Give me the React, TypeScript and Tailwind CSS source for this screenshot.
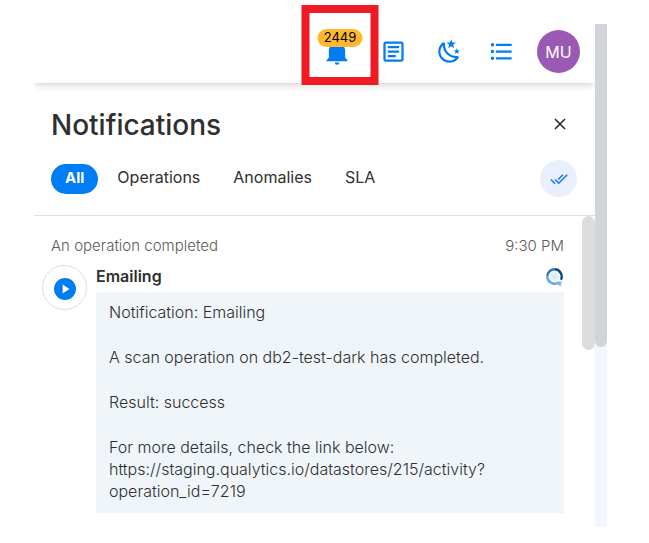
import React, { useState } from "react";
import { MdFormatListBulleted, MdOutlineArticle } from "react-icons/md";

const TABS = ["All", "Operations", "Anomalies", "SLA"];

const MESSAGE = [
  "Notification: Emailing",
  "A scan operation on db2-test-dark has completed.",
  "Result: success",
];

function BellIcon() {
  return (
    <svg viewBox="0 0 24 24" className="size-7" fill="currentColor" aria-hidden="true">
      <path d="M21 19v1H3v-1l2-2v-6c0-3.1 2.03-5.83 5-6.71V4a2 2 0 0 1 4 0v.29c2.97.88 5 3.61 5 6.71v6l2 2m-7 2a2 2 0 0 1-4 0" />
    </svg>
  );
}

function NightIcon() {
  return (
    <svg viewBox="0 0 24 24" className="size-[27px]" fill="currentColor" aria-hidden="true">
      <path d="M17.75 4.09L15.22 6.03L16.13 9.09L13.5 7.28L10.87 9.09L11.78 6.03L9.25 4.09L12.44 4L13.5 1L14.56 4L17.75 4.09M21.25 11L19.61 12.25L20.2 14.23L18.5 13.06L16.8 14.23L17.39 12.25L15.75 11L17.81 10.95L18.5 9L19.19 10.95L21.25 11M18.97 15.95C19.8 15.87 20.69 17.05 20.16 17.8C19.84 18.25 19.5 18.67 19.08 19.07C15.17 23 8.84 23 4.94 19.07C1.03 15.17 1.03 8.83 4.94 4.93C5.34 4.53 5.76 4.17 6.21 3.85C6.96 3.32 8.14 4.21 8.06 5.04C7.79 7.9 8.75 10.87 10.95 13.06C13.14 15.26 16.1 16.22 18.97 15.95M17.33 17.97C14.5 17.81 11.7 16.64 9.53 14.5C7.36 12.31 6.2 9.5 6.04 6.68C3.23 9.82 3.34 14.64 6.35 17.66C9.37 20.67 14.19 20.78 17.33 17.97Z" />
    </svg>
  );
}

function CheckAllIcon() {
  return (
    <svg viewBox="0 0 24 24" className="size-[18px]" fill="currentColor" aria-hidden="true">
      <path d="M.41 13.41L6 19l1.41-1.42L1.83 12m20.41-6.42L11.66 16.17L7.5 12l-1.43 1.41L11.66 19l12-12M18 7l-1.41-1.42l-6.35 6.35l1.42 1.41z" />
    </svg>
  );
}

function QualyticsMark() {
  return (
    <svg viewBox="0 0 18 19" className="h-[19px] w-[18px]" fill="none" role="img" aria-label="Qualytics">
      <defs>
        <radialGradient id="q-core">
          <stop offset="0" stopColor="#cfe4f7" />
          <stop offset="1" stopColor="#f1f8fe" />
        </radialGradient>
      </defs>
      <circle cx="8.5" cy="8.5" r="5.4" fill="url(#q-core)" />
      <path d="M1.3 8.5A7.2 7.2 0 0 1 8.5 1.3" stroke="#3577ac" strokeWidth="2.4" />
      <path d="M8.5 1.3A7.2 7.2 0 0 1 14.9 11.8" stroke="#0e4a7b" strokeWidth="2.4" />
      <path d="M1.3 8.5A7.2 7.2 0 0 0 11.6 15" stroke="#63a5dc" strokeWidth="2.4" />
      <path d="M11 14l3.8 3.6M11.6 14.6h4" stroke="#76b4e8" strokeWidth="2" />
    </svg>
  );
}

function Header() {
  return (
    <header className="relative flex items-center justify-end pt-[30px] pr-[15px] pb-[10px] text-[#007df5] shadow-[0_1px_8px_rgba(0,0,0,0.22)]">
      <div className="flex items-center gap-7">
        <button type="button" aria-label="Notifications" className="relative flex size-7 items-center justify-center">
          <BellIcon />
          <span className="absolute -top-[9px] left-1/2 ml-[3px] flex h-[18px] w-[45px] -translate-x-1/2 items-center justify-center rounded-full bg-[#ffb82e] text-[13px] text-black">
            2449
          </span>
          <span className="pointer-events-none absolute -top-[33px] left-1/2 ml-[3px] h-20 w-[77px] -translate-x-1/2 border-8 border-[#ee1b24]" />
        </button>
        <button type="button" aria-label="News" className="flex size-7 items-center justify-center">
          <MdOutlineArticle className="size-[27px]" />
        </button>
        <button type="button" aria-label="Dark mode" className="flex size-7 items-center justify-center">
          <NightIcon />
        </button>
      </div>
      <button type="button" aria-label="Menu" className="ml-6 flex size-7 items-center justify-center">
        <MdFormatListBulleted className="size-[27px]" />
      </button>
      <button
        type="button"
        className="ml-[22px] flex size-[43px] items-center justify-center rounded-full bg-[#9b59b6] text-base text-white"
      >
        MU
      </button>
    </header>
  );
}

export default function App() {
  const [active, setActive] = useState("All");

  return (
    <div className="flex bg-white pr-[42px] pl-[34px] font-['Inter','Liberation_Sans',sans-serif] text-base text-[#2f2f2f]">
      <div className="min-w-0 flex-1 overflow-x-clip">
        <Header />
        <main>
          <div className="border-b border-[#dfdfdf] pr-[18px] pb-[18px] pl-[17px]">
            <div className="flex items-center justify-between pt-[21px]">
              <h1 className="pt-[2px] text-[28px] leading-[38px] font-medium">Notifications</h1>
              <button type="button" aria-label="Close" className="mr-[7px] flex size-5 items-center justify-center">
                <svg viewBox="0 0 12 12" className="size-3" stroke="#222" strokeWidth="1.5" aria-hidden="true">
                  <path d="M1 1l10 10M11 1L1 11" />
                </svg>
              </button>
            </div>
            <div className="mt-4 flex items-center justify-between">
              <nav className="flex gap-[5px]">
                {TABS.map((tab) => (
                  <button
                    key={tab}
                    type="button"
                    onClick={() => setActive(tab)}
                    className={
                      tab === active
                        ? "h-[30px] rounded-full bg-[#007df5] px-[14px] text-[15px] font-bold text-white"
                        : "h-[30px] rounded-full px-[14px] pb-[3px]"
                    }
                  >
                    {tab}
                  </button>
                ))}
              </nav>
              <button
                type="button"
                aria-label="Mark all as read"
                className="flex size-[37px] items-center justify-center rounded-full bg-[#e9effc] text-[#1677f5]"
              >
                <CheckAllIcon />
              </button>
            </div>
          </div>

          <div className="flex">
            <article className="min-w-0 flex-1 pt-[19px] pr-[18px] pl-2">
              <div className="flex justify-between pl-[9px] text-[15px] leading-[22px] font-light text-[#5c5c5c]">
                <span>An operation completed</span>
                <time>9:30 PM</time>
              </div>
              <div className="mt-2 flex gap-[9px]">
                <div className="flex size-[45px] shrink-0 items-center justify-center rounded-full border border-[#dedede]">
                  <svg viewBox="0 0 22 22" className="mt-[2px] size-[22px]" aria-hidden="true">
                    <circle cx="11" cy="11" r="11" fill="#007df5" />
                    <path d="M8.6 6.4v9.2l6.8-4.6z" fill="#fff" />
                  </svg>
                </div>
                <div className="min-w-0 flex-1">
                  <div className="flex h-[27px] items-start justify-between">
                    <h2 className="leading-[22px] font-semibold">Emailing</h2>
                    <span className="pt-[3px]">
                      <QualyticsMark />
                    </span>
                  </div>
                  <div className="flex flex-col gap-[23px] bg-[#f0f5fa] px-[13px] pt-[9px] pb-[11px] leading-[22px] font-light">
                    {MESSAGE.map((line) => (
                      <p key={line}>{line}</p>
                    ))}
                    <p>
                      For more details, check the link below:
                      <br />
                      https://staging.qualytics.io/datastores/215/activity?
                      <br />
                      operation_id=7219
                    </p>
                  </div>
                </div>
              </div>
            </article>
            <div className="h-[134px] w-[13px] shrink-0 rounded-full bg-[#dcdcdc]" />
          </div>
        </main>
      </div>
      <div className="mt-6 h-[503px] w-3 shrink-0 bg-[#f3f6fc]">
        <div className="h-[323px] rounded-b-full bg-[#d1d5da]" />
      </div>
    </div>
  );
}
